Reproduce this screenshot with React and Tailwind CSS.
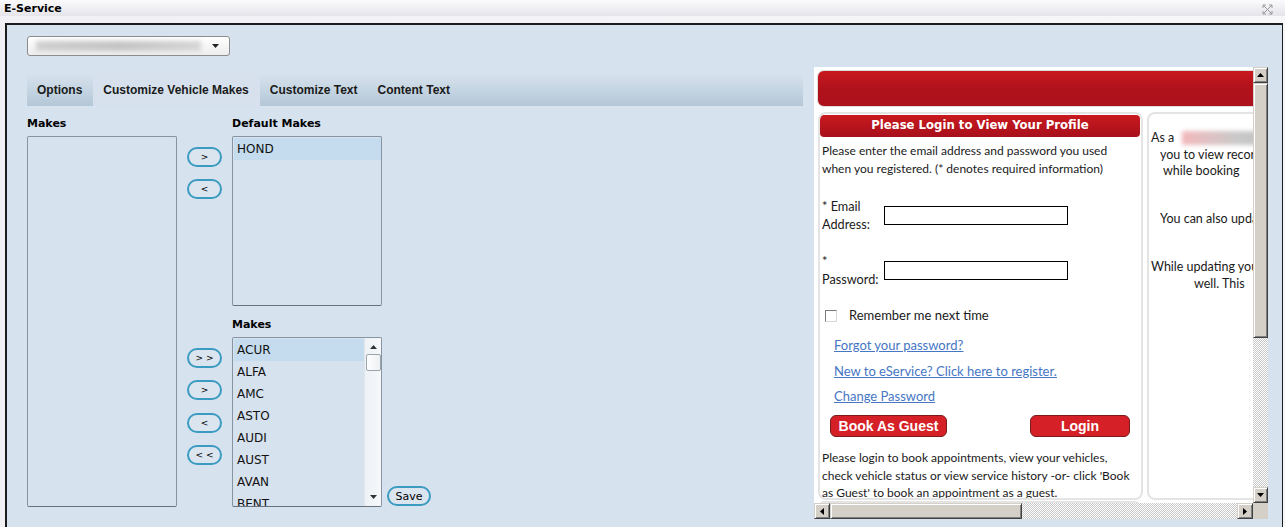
import React from 'react';

const tabs = ['Options', 'Customize Vehicle Makes', 'Customize Text', 'Content Text'];
const makes = ['ACUR', 'ALFA', 'AMC', 'ASTO', 'AUDI', 'AUST', 'AVAN', 'BENT'];

const bevel =
  'bg-[#d4d0c8] border-t border-l border-t-[#d4d0c8] border-l-[#d4d0c8] border-b border-r border-b-[#404040] border-r-[#404040] shadow-[inset_1px_1px_#ffffff,inset_-1px_-1px_#808080]';
const checker =
  'bg-[repeating-conic-gradient(#ffffff_0%_25%,#c8c8c8_0%_50%)] bg-[length:2px_2px]';

function Pill({ children, className = '' }) {
  return (
    <button
      className={`flex h-[20px] w-[35px] items-center justify-center rounded-full border-2 border-[#3b9bc1] bg-[#dae5ef] text-[9px] leading-none text-black ${className}`}
    >
      {children}
    </button>
  );
}

function Tri({ dir }) {
  const d = {
    up: 'M0 4 L3.5 0 L7 4 Z',
    down: 'M0 0 L7 0 L3.5 4 Z',
    left: 'M4 0 L4 7 L0 3.5 Z',
    right: 'M0 0 L0 7 L4 3.5 Z',
  }[dir];
  const vert = dir === 'up' || dir === 'down';
  return (
    <svg width={vert ? 7 : 4} height={vert ? 4 : 7} viewBox={vert ? '0 0 7 4' : '0 0 4 7'}>
      <path d={d} fill="#000" />
    </svg>
  );
}

function CloseIcon() {
  return (
    <svg width="11" height="11" viewBox="0 0 11 11" className="mt-[2px]">
      <path d="M1 1 L10 10 M10 1 L1 10" stroke="#9a9a9a" strokeWidth="1" fill="none" />
      <path d="M1 1 h3 M1 1 v3 M10 1 h-3 M10 1 v3 M1 10 h3 M1 10 v-3 M10 10 h-3 M10 10 v-3" stroke="#9a9a9a" strokeWidth="1" fill="none" />
    </svg>
  );
}

function ListBox({ items, height, scroll }) {
  return (
    <div
      className="flex overflow-hidden rounded-[2px] border border-[#8795a3] border-b-[#66737f] bg-[#d6e2ee]"
      style={{ height }}
    >
      <div className="flex-1 pt-[1px] pl-[1px]">
        {items.map((m, i) => (
          <div
            key={m}
            className={`flex h-[22px] items-center pl-[3px] text-[12px] leading-none text-[#111] ${
              i === 0 ? 'bg-[#c4dced]' : ''
            }`}
          >
            {m}
          </div>
        ))}
      </div>
      {scroll && (
        <div className="flex w-[17px] flex-col items-center border-l border-[#dfe6ec] bg-gradient-to-r from-[#eef2f6] to-[#f6f8fa]">
          <div className="flex h-[16px] items-center justify-center pt-[2px]">
            <svg width="7" height="4" viewBox="0 0 7 4"><path d="M0 4 L3.5 0 L7 4 Z" fill="#333" /></svg>
          </div>
          <div className="h-[17px] w-[15px] rounded-[2px] border border-[#9aa4ad] bg-gradient-to-r from-white to-[#eef0f2]" />
          <div className="flex-1" />
          <div className="flex h-[16px] items-center justify-center pb-[2px]">
            <svg width="7" height="4" viewBox="0 0 7 4"><path d="M0 0 L7 0 L3.5 4 Z" fill="#333" /></svg>
          </div>
        </div>
      )}
    </div>
  );
}

function LoginCard() {
  return (
    <div className="h-[388px] w-[325px] shrink-0 overflow-hidden rounded-[8px] border-2 border-[#e4e4e4] bg-white font-['Lato',sans-serif] text-[12px] text-[#1a1a1a]">
      <div className="mt-[1px] flex h-[22px] w-[320px] items-center justify-center rounded-[4px] bg-gradient-to-b from-[#c9191f] to-[#a8101b] font-['DejaVu_Sans',sans-serif] text-[11.7px] font-bold text-white">
        Please Login to View Your Profile
      </div>
      <div className="px-[2px]">
        <p className="mt-[5px] whitespace-nowrap leading-[18px]">
          Please enter the email address and password you used
          <br />
          when you registered. (* denotes required information)
        </p>

        <div className="mt-[19px] flex items-center text-[12.7px]">
          <div className="w-[62px] leading-[18px]">
            * Email
            <br />
            Address:
          </div>
          <div className="h-[19px] w-[184px] border border-black" />
        </div>

        <div className="mt-[19px] flex items-center text-[12.7px]">
          <div className="w-[62px] leading-[18px]">
            *
            <br />
            Password:
          </div>
          <div className="h-[19px] w-[184px] border border-black" />
        </div>

        <div className="mt-[19px] flex h-[18px] items-center text-[13px]">
          <div className="ml-[3px] h-[12px] w-[12px] border border-t-[#7a7a7a] border-l-[#7a7a7a] border-b-[#d8d8d8] border-r-[#d8d8d8] bg-white" />
          <span className="ml-[12px]">Remember me next time</span>
        </div>

        <div className="mt-[11px] flex flex-col pl-[12px] text-[13px] leading-[18px] text-[#4676c4] underline">
          <a>Forgot your password?</a>
          <a className="mt-[8px]">New to eService? Click here to register.</a>
          <a className="mt-[7px]">Change Password</a>
        </div>

        <div className="mt-[10px] flex items-center pl-[8px]">
          <button className="h-[22px] w-[117px] rounded-[6px] border border-[#7a1c1c] bg-[#d52027] font-['Liberation_Sans',sans-serif] text-[14px] font-bold leading-none text-white">
            Book As Guest
          </button>
          <button className="ml-[83px] h-[22px] w-[100px] rounded-[6px] border border-[#7a1c1c] bg-[#d52027] font-['Liberation_Sans',sans-serif] text-[14px] font-bold leading-none text-white">
            Login
          </button>
        </div>

        <p className="mt-[12px] whitespace-nowrap leading-[17.5px]">
          Please login to book appointments, view your vehicles,
          <br />
          check vehicle status or view service history -or- click 'Book
          <br />
          as Guest' to book an appointment as a guest.
        </p>
      </div>
    </div>
  );
}

function InfoCard() {
  return (
    <div className="h-[388px] w-[260px] shrink-0 rounded-[8px] border-2 border-[#e4e4e4] bg-white pt-[16px] font-['Lato',sans-serif] text-[12.5px] leading-[16.5px] text-[#1a1a1a]">
      <div className="flex items-center pl-[2px]">
        <span>As a</span>
        <span className="ml-[8px] h-[14px] w-[110px] bg-gradient-to-r from-[#f2b8bc] via-[#c9c9c9] to-[#bdbdbd] blur-[2px]" />
      </div>
      <div className="pl-[11px]">you to view records of your vehicles</div>
      <div className="pl-[14px]">while booking</div>
      <div className="mt-[31px] pl-[11px]">You can also update your information</div>
      <div className="mt-[32px] pl-[2px]">While updating your profile</div>
      <div className="pl-[45px]">well. This</div>
    </div>
  );
}

function Preview() {
  return (
    <div className="flex h-[452px] w-[454px] flex-col bg-white">
      <div className="flex h-[436px]">
        <div className="w-[439px] overflow-hidden">
          <div className="w-[700px] pl-[3px] pt-[3px]">
            <div className="h-[37px] w-[600px] rounded-[7px] border border-[#dcdcdc] bg-gradient-to-b from-[#c8181e] via-[#b0121c] to-[#ad111b]" />
            <div className="mt-[5px] flex gap-[4px] pl-[1px]">
              <LoginCard />
              <InfoCard />
            </div>
            <div className="mt-[1px] h-[10px] w-[325px] rounded-t-[8px] border-2 border-b-0 border-[#e4e4e4]" />
          </div>
        </div>
        <div className="flex w-[15px] flex-col">
          <div className={`flex h-[16px] items-center justify-center ${bevel}`}>
            <Tri dir="up" />
          </div>
          <div className={`h-[255px] ${bevel}`} />
          <div className={`flex-1 ${checker}`} />
          <div className={`flex h-[16px] items-center justify-center ${bevel}`}>
            <Tri dir="down" />
          </div>
        </div>
      </div>
      <div className="flex h-[16px]">
        <div className="flex w-[439px]">
          <div className={`flex w-[16px] items-center justify-center ${bevel}`}>
            <Tri dir="left" />
          </div>
          <div className={`w-[192px] ${bevel}`} />
          <div className={`flex-1 ${checker}`} />
          <div className={`flex w-[16px] items-center justify-center ${bevel}`}>
            <Tri dir="right" />
          </div>
        </div>
        <div className="w-[15px] bg-[#d4d0c8]" />
      </div>
    </div>
  );
}

export default function App() {
  return (
    <div className="h-[527px] w-[1285px] overflow-hidden bg-gradient-to-r from-[#f1f1f5] to-[#f7f7fa] font-['DejaVu_Sans',sans-serif]">
      {/* title bar */}
      <div className="flex h-[16px] items-center justify-between bg-gradient-to-b from-[#fbfbfd] to-[#e4e4ea] pl-[4px] pr-[12px]">
        <span className="text-[11px] font-bold leading-none text-black">E-Service</span>
        <CloseIcon />
      </div>

      <div className="ml-[5px] mr-[2px] mt-[7px] flex h-[600px] border-l-2 border-r border-t-2 border-[#1c1c1c] bg-[#d6e2ee] pl-[20px] pt-[11px]">
        {/* editor column */}
        <div className="w-[776px] shrink-0">
          <div className="flex h-[20px] w-[203px] items-center justify-between rounded-[3px] border border-[#8c8c8c] bg-gradient-to-b from-white to-[#ededed] pl-[8px] pr-[10px]">
            <div className="h-[10px] w-[165px] bg-gradient-to-r from-[#d0d0d0] via-[#c4c4c4] to-[#d6d6d6] blur-[2px]" />
            <svg width="7" height="4" viewBox="0 0 7 4"><path d="M0 0 L7 0 L3.5 4 Z" fill="#222" /></svg>
          </div>

          <div className="mt-[15px] flex h-[35px] bg-[linear-gradient(to_bottom,transparent_3px,#d7e2ed_3px,#b3c7d7)]">
            {tabs.map((t, i) => (
              <div
                key={t}
                className={`flex h-full items-center pt-[3px] text-[12px] font-bold font-['Liberation_Sans',sans-serif] text-[#1a1a1a] ${
                  i === 1 ? 'rounded-t-[9px] bg-[#d6e1ed] pl-[10px] pr-[11px]' : i === 3 ? 'pl-[10px]' : 'px-[10px]'
                } ${i === 0 ? 'pr-[11px]' : ''}`}
              >
                {t}
              </div>
            ))}
          </div>

          <div className="mt-[11px] flex text-[11px]">
            <div className="w-[150px]">
              <div className="h-[19px] font-bold leading-[14px]">Makes</div>
              <ListBox items={[]} height={371} />
            </div>

            <div className="ml-[10px] flex w-[35px] flex-col pt-[30px]">
              <Pill>&gt;</Pill>
              <Pill className="mt-[12px]">&lt;</Pill>
              <Pill className="mt-[149px]">&gt; &gt;</Pill>
              <Pill className="mt-[12px]">&gt;</Pill>
              <Pill className="mt-[13px]">&lt;</Pill>
              <Pill className="mt-[12px]">&lt; &lt;</Pill>
            </div>

            <div className="ml-[10px] w-[150px]">
              <div className="h-[19px] font-bold leading-[14px]">Default Makes</div>
              <ListBox items={['HOND']} height={170} />
              <div className="h-[31px] pt-[12px] font-bold leading-[14px]">Makes</div>
              <ListBox items={makes} height={170} scroll />
            </div>

            <div className="ml-[5px] flex flex-col justify-end pb-[1px]">
              <button className="h-[20px] w-[44px] rounded-full border-2 border-[#3b9bc1] bg-[#dae5ef] text-[11px] leading-none text-black">
                Save
              </button>
            </div>
          </div>
        </div>

        {/* preview */}
        <div className="ml-[11px] mt-[31px]">
          <Preview />
        </div>
      </div>
    </div>
  );
}
